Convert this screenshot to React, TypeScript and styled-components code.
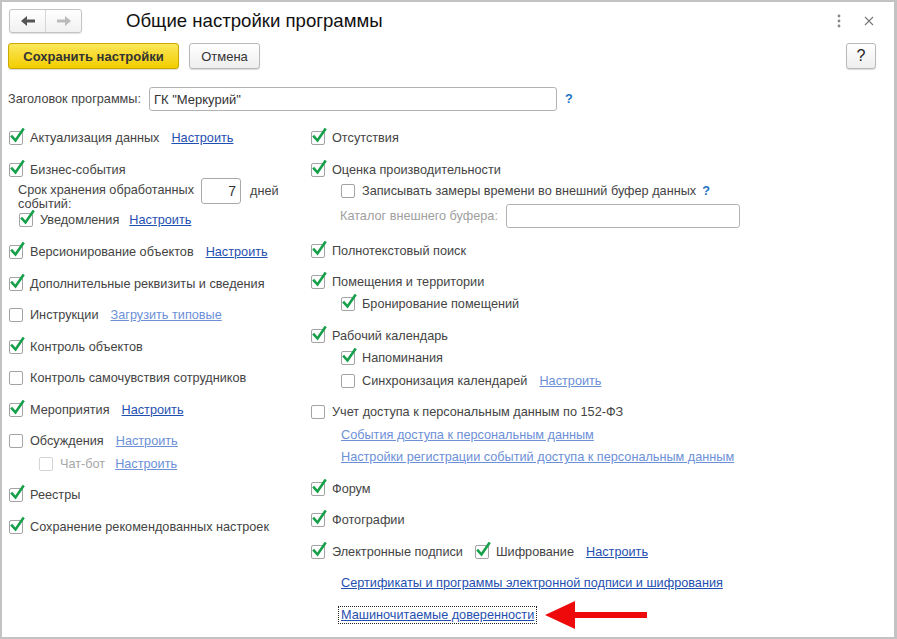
import React from 'react';
import styled, { createGlobalStyle } from 'styled-components';

const GlobalStyle = createGlobalStyle`
	html, body {
		margin: 0;
		padding: 0;
		background: #fff;
	}
	body {
		font-family: 'Liberation Sans', Arial, sans-serif;
		font-size: 12.7px;
		color: #444;
	}
`;

const Window = styled.div`
	box-sizing: border-box;
	width: 897px;
	height: 639px;
	border: 2px solid #c3c3c3;
	border-right-width: 3px;
	padding: 0 6px;
	background: #fff;
	overflow: hidden;
`;

const Header = styled.div`
	display: flex;
	align-items: center;
	height: 24px;
	margin-top: 7px;
`;

const NavGroup = styled.div`
	display: flex;
	margin-left: 1px;
	height: 24px;
	border: 1px solid #c4c4c4;
	border-radius: 3px;
	box-sizing: border-box;
	background: linear-gradient(#ffffff, #f1f1f1);
	box-shadow: 0 1px 1px rgba(0, 0, 0, 0.12);
`;

const NavButton = styled.div<{ $left?: boolean }>`
	width: 35px;
	display: flex;
	align-items: center;
	justify-content: center;
	border-left: ${(p) => (p.$left ? 'none' : '1px solid #d6d6d6')};
`;

const Title = styled.div`
	margin-left: 44px;
	font-size: 18.6px;
	color: #111;
	flex: 1;
`;

const HeaderIcon = styled.div<{ $mr?: number }>`
	width: 30px;
	margin-right: ${(p) => p.$mr || 0}px;
	display: flex;
	align-items: center;
	justify-content: center;
`;

const Toolbar = styled.div`
	display: flex;
	align-items: center;
	margin-top: 10px;
	height: 26px;
`;

const Button = styled.button<{ $primary?: boolean; $w?: number }>`
	box-sizing: border-box;
	height: 26px;
	width: ${(p) => (p.$w ? `${p.$w}px` : 'auto')};
	padding: 0;
	margin-right: 10px;
	font-family: 'Liberation Sans', Arial, sans-serif;
	font-size: 13px;
	font-weight: ${(p) => (p.$primary ? 'bold' : 'normal')};
	color: #333;
	border-radius: 3px;
	border: 1px solid ${(p) => (p.$primary ? '#c9a800' : '#b8b8b8')};
	background: ${(p) =>
		p.$primary
			? 'linear-gradient(#fbe75a, #f3cd00)'
			: 'linear-gradient(#ffffff, #eeeeee)'};
	box-shadow: 0 1px 1px rgba(0, 0, 0, 0.15);
`;

const HelpButton = styled(Button)`
	margin: 0 12px 0 auto;
	font-size: 16px;
	color: #222;
`;

const FieldRow = styled.div`
	display: flex;
	align-items: center;
	margin-top: 18px;
	height: 24px;
`;

const FieldLabel = styled.span<{ $muted?: boolean }>`
	color: ${(p) => (p.$muted ? '#a0a0a0' : '#444')};
	margin-right: 8px;
	white-space: nowrap;
`;

const TextBox = styled.div<{ $w: number; $h?: number; $right?: boolean }>`
	box-sizing: border-box;
	width: ${(p) => p.$w}px;
	height: ${(p) => p.$h || 24}px;
	border: 1px solid ${(p) => (p.$right ? '#a9a9a9' : '#b3b3b3')};
	border-radius: 3px;
	padding: 0 4px;
	display: flex;
	align-items: center;
	justify-content: ${(p) => (p.$right ? 'flex-end' : 'flex-start')};
	color: #333;
	font-size: ${(p) => (p.$right ? '14px' : '13px')};
	background: #fff;
`;

const Hint = styled.span<{ $gap?: number }>`
	color: #1c74c4;
	font-weight: bold;
	margin-left: ${(p) => (p.$gap === undefined ? 8 : p.$gap)}px;
`;

const Columns = styled.div`
	display: grid;
	grid-template-columns: 302px 1fr;
	margin-top: 17px;
`;

const Column = styled.div`
	display: flex;
	flex-direction: column;
	padding-left: 1px;
`;

const Group = styled.div<{ $first?: boolean }>`
	display: flex;
	flex-direction: column;
	margin-top: ${(p) => (p.$first ? '0' : '11.5px')};
`;

const Row = styled.div<{ $indent?: number; $mt?: number; $h?: number }>`
	display: flex;
	align-items: center;
	height: ${(p) => p.$h || 20}px;
	padding-left: ${(p) => p.$indent || 0}px;
	margin-top: ${(p) => (p.$mt === undefined ? 0 : p.$mt)}px;
	white-space: nowrap;
`;

const BoxWrap = styled.span<{ $ml?: number }>`
	position: relative;
	display: inline-block;
	width: 14px;
	height: 14px;
	margin-left: ${(p) => p.$ml || 0}px;
	margin-right: 7px;
	flex-shrink: 0;
`;

const Box = styled.span<{ $disabled?: boolean }>`
	display: block;
	box-sizing: border-box;
	width: 14px;
	height: 14px;
	border: 1px solid ${(p) => (p.$disabled ? '#d4d4d4' : '#a3a3a3')};
	border-radius: 2px;
	background: #fff;
`;

const Tick = styled.svg`
	position: absolute;
	left: 1px;
	top: -3px;
`;

const Label = styled.span<{ $disabled?: boolean }>`
	color: ${(p) => (p.$disabled ? '#a8a8a8' : '#444')};
`;

const Link = styled.a<{ $faded?: boolean; $gap?: number }>`
	color: ${(p) => (p.$faded ? '#6c8fd8' : '#1f4fb0')};
	text-decoration: underline;
	margin-left: ${(p) => (p.$gap === undefined ? 12 : p.$gap)}px;
	cursor: pointer;
`;

const FocusLink = styled(Link)`
	outline: 1px dotted #222;
	outline-offset: 1px;
	padding: 0 1px;
	margin-left: -1px;
`;

const TwoLines = styled.div`
	display: flex;
	flex-direction: column;
	line-height: 14px;
	width: 183px;
	margin-top: 2px;
`;

const StoreBlock = styled.div`
	display: flex;
	align-items: flex-start;
	padding-left: 9px;
	margin-top: 1px;
	height: 29px;
`;

const DaysBox = styled.div`
	display: flex;
	align-items: center;
	margin-top: -3px;
`;

const Days = styled.span`
	margin-left: 9px;
`;

const Arrow = styled.svg`
	margin-left: 10px;
`;

const Check = ({ on, disabled, ml }: { on?: boolean; disabled?: boolean; ml?: number }) => (
	<BoxWrap $ml={ml}>
		<Box $disabled={disabled} />
		{on && (
			<Tick width='15' height='16' viewBox='0 0 15 16'>
				<path
					d='M2 8.5 L5.5 12.5 L13 1.5'
					fill='none'
					stroke='#16a04a'
					strokeWidth='2.6'
					strokeLinecap='square'
				/>
			</Tick>
		)}
	</BoxWrap>
);

const App = () => {
	return (
		<>
			<GlobalStyle />
			<Window>
				<Header>
					<NavGroup>
						<NavButton $left>
							<svg width='14' height='10' viewBox='0 0 14 10'>
								<path d='M0 5 L6 0 V3.5 H14 V6.5 H6 V10 Z' fill='#555' />
							</svg>
						</NavButton>
						<NavButton>
							<svg width='14' height='10' viewBox='0 0 14 10'>
								<path d='M14 5 L8 0 V3.5 H0 V6.5 H8 V10 Z' fill='#bbb' />
							</svg>
						</NavButton>
					</NavGroup>
					<Title>Общие настройки программы</Title>
					<HeaderIcon>
						<svg width='4' height='14' viewBox='0 0 4 14'>
							<circle cx='2' cy='2' r='1.4' fill='#888' />
							<circle cx='2' cy='7' r='1.4' fill='#888' />
							<circle cx='2' cy='12' r='1.4' fill='#888' />
						</svg>
					</HeaderIcon>
					<HeaderIcon $mr={4}>
						<svg width='10' height='10' viewBox='0 0 10 10'>
							<path d='M1 1 L9 9 M9 1 L1 9' stroke='#777' strokeWidth='1.1' />
						</svg>
					</HeaderIcon>
				</Header>

				<Toolbar>
					<Button $primary $w={171}>
						Сохранить настройки
					</Button>
					<Button $w={71}>Отмена</Button>
					<HelpButton $w={30}>?</HelpButton>
				</Toolbar>

				<FieldRow>
					<FieldLabel>Заголовок программы:</FieldLabel>
					<TextBox $w={408}>ГК "Меркурий"</TextBox>
					<Hint>?</Hint>
				</FieldRow>

				<Columns>
					<Column>
						<Group $first>
							<Row>
								<Check on />
								<Label>Актуализация данных</Label>
								<Link>Настроить</Link>
							</Row>
						</Group>
						<Group>
							<Row>
								<Check on />
								<Label>Бизнес-события</Label>
							</Row>
							<StoreBlock>
								<TwoLines>
									<span>Срок хранения обработанных</span>
									<span>событий:</span>
								</TwoLines>
								<DaysBox>
									<TextBox $w={40} $h={26} $right>
										7
									</TextBox>
									<Days>дней</Days>
								</DaysBox>
							</StoreBlock>
							<Row $indent={10} $mt={0} $h={21}>
								<Check on />
								<Label>Уведомления</Label>
								<Link $gap={10}>Настроить</Link>
							</Row>
						</Group>
						<Group>
							<Row>
								<Check on />
								<Label>Версионирование объектов</Label>
								<Link>Настроить</Link>
							</Row>
						</Group>
						<Group>
							<Row>
								<Check on />
								<Label>Дополнительные реквизиты и сведения</Label>
							</Row>
						</Group>
						<Group>
							<Row>
								<Check />
								<Label>Инструкции</Label>
								<Link $faded>Загрузить типовые</Link>
							</Row>
						</Group>
						<Group>
							<Row>
								<Check on />
								<Label>Контроль объектов</Label>
							</Row>
						</Group>
						<Group>
							<Row>
								<Check />
								<Label>Контроль самочувствия сотрудников</Label>
							</Row>
						</Group>
						<Group>
							<Row>
								<Check on />
								<Label>Мероприятия</Label>
								<Link>Настроить</Link>
							</Row>
						</Group>
						<Group>
							<Row>
								<Check />
								<Label>Обсуждения</Label>
								<Link $faded>Настроить</Link>
							</Row>
							<Row $indent={30} $mt={2.5}>
								<Check disabled />
								<Label $disabled>Чат-бот</Label>
								<Link $faded $gap={10}>
									Настроить
								</Link>
							</Row>
						</Group>
						<Group>
							<Row>
								<Check on />
								<Label>Реестры</Label>
							</Row>
						</Group>
						<Group>
							<Row>
								<Check on />
								<Label>Сохранение рекомендованных настроек</Label>
							</Row>
						</Group>
					</Column>

					<Column>
						<Group $first>
							<Row>
								<Check on />
								<Label>Отсутствия</Label>
							</Row>
						</Group>
						<Group>
							<Row>
								<Check on />
								<Label>Оценка производительности</Label>
							</Row>
							<Row $indent={30} $mt={1.5}>
								<Check />
								<Label>Записывать замеры времени во внешний буфер данных</Label>
								<Hint $gap={6}>?</Hint>
							</Row>
							<Row $indent={29} $mt={2} $h={26}>
								<FieldLabel $muted>Каталог внешнего буфера:</FieldLabel>
								<TextBox $w={234} />
							</Row>
						</Group>
						<Group>
							<Row>
								<Check on />
								<Label>Полнотекстовый поиск</Label>
							</Row>
						</Group>
						<Group>
							<Row>
								<Check on />
								<Label>Помещения и территории</Label>
							</Row>
							<Row $indent={30} $mt={2}>
								<Check on />
								<Label>Бронирование помещений</Label>
							</Row>
						</Group>
						<Group>
							<Row>
								<Check on />
								<Label>Рабочий календарь</Label>
							</Row>
							<Row $indent={30} $mt={2}>
								<Check on />
								<Label>Напоминания</Label>
							</Row>
							<Row $indent={30} $mt={3}>
								<Check />
								<Label>Синхронизация календарей</Label>
								<Link $faded>Настроить</Link>
							</Row>
						</Group>
						<Group>
							<Row>
								<Check />
								<Label>Учет доступа к персональным данным по 152-ФЗ</Label>
							</Row>
							<Row $indent={30} $mt={3}>
								<Link $faded $gap={0}>
									События доступа к персональным данным
								</Link>
							</Row>
							<Row $indent={30} $mt={2}>
								<Link $faded $gap={0}>
									Настройки регистрации событий доступа к персональным данным
								</Link>
							</Row>
						</Group>
						<Group>
							<Row>
								<Check on />
								<Label>Форум</Label>
							</Row>
						</Group>
						<Group>
							<Row>
								<Check on />
								<Label>Фотографии</Label>
							</Row>
						</Group>
						<Group>
							<Row>
								<Check on />
								<Label>Электронные подписи</Label>
								<Check on ml={12} />
								<Label>Шифрование</Label>
								<Link>Настроить</Link>
							</Row>
						</Group>
						<Group>
							<Row $indent={30}>
								<Link $gap={0}>
									Сертификаты и программы электронной подписи и шифрования
								</Link>
							</Row>
						</Group>
						<Group>
							<Row $indent={30}>
								<FocusLink>Машиночитаемые доверенности</FocusLink>
								<Arrow width='104' height='30' viewBox='0 0 104 30'>
									<path d='M0 15 L30 1 L30 12 L102 12 L102 18 L30 18 L30 29 Z' fill='#ee0a0a' />
								</Arrow>
							</Row>
						</Group>
					</Column>
				</Columns>
			</Window>
		</>
	);
};

export default App;
